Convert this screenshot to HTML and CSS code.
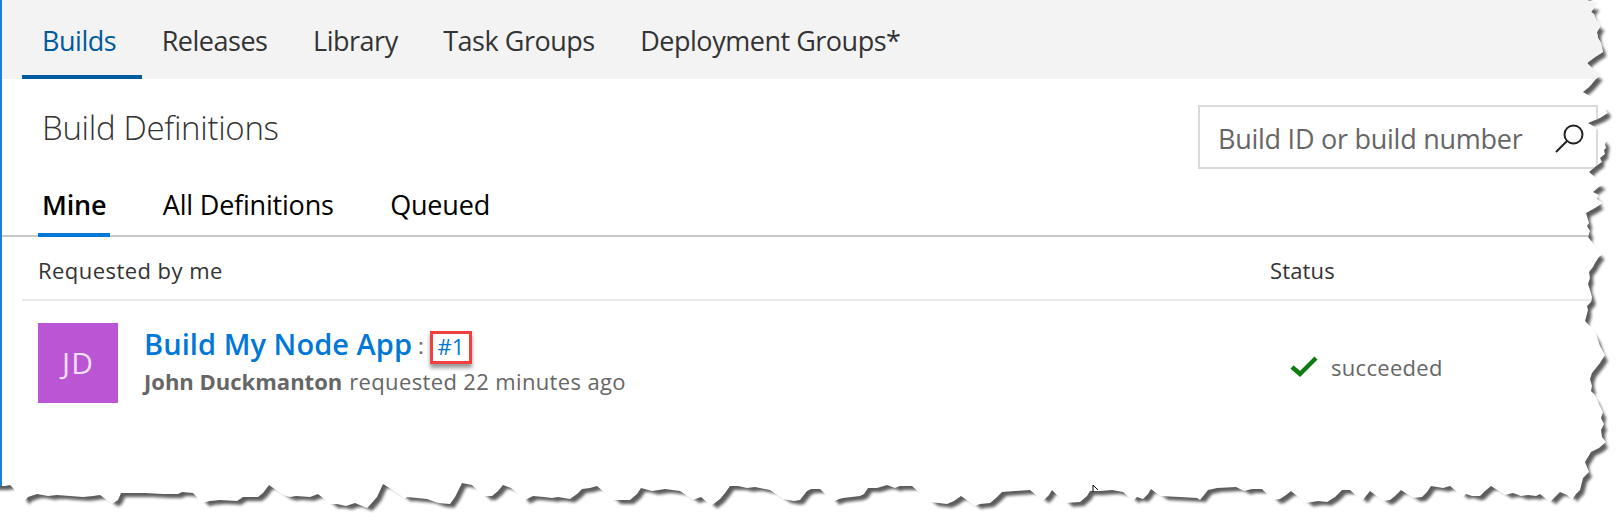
FILE: index.html
```html
<!DOCTYPE html>
<html lang="en">
<head>
<meta charset="utf-8">
<title>Build Definitions</title>
<link rel="stylesheet" href="styles.css">
</head>
<body>
<div class="stage">
  <svg class="paper" width="1624" height="523" viewBox="0 0 1624 523" aria-hidden="true">
    <defs>
      <filter id="shade" filterUnits="userSpaceOnUse" x="-20" y="-20" width="1664" height="563" color-interpolation-filters="sRGB">
        <feMorphology in="SourceAlpha" operator="erode" radius="2"/>
        <feOffset dx="5.5" dy="5.5"/>
        <feGaussianBlur stdDeviation="1.6"/>
        <feComponentTransfer result="cast"><feFuncA type="linear" slope=".64"/></feComponentTransfer>
        <feMerge><feMergeNode in="cast"/><feMergeNode in="SourceGraphic"/></feMerge>
      </filter>
      <path id="sheet" d="M-20 -20H1590L1586 0L1598 3L1594 8L1591 12L1594 14L1596 20L1601 23L1600 27L1597 32L1598 38L1601 43L1602 48L1603 52L1595 57L1587 63L1592 68L1601 74L1596 79L1591 85L1588 88L1583 92L1590 96L1599 101L1608 108L1606 111L1608 113L1600 118L1588 123L1595 127L1602 135L1607 140L1605 144L1606 148L1604 150L1605 154L1600 158L1602 162L1596 166L1589 172L1595 177L1605 184L1599 187L1593 192L1599 195L1597 199L1603 203L1595 208L1586 213L1589 223L1587 226L1590 231L1588 237L1597 248L1603 254L1599 257L1595 263L1593 267L1589 272L1590 278L1588 284L1590 290L1592 297L1591 302L1587 306L1588 310L1585 321L1592 328L1596 334L1598 340L1600 346L1605 355L1600 363L1592 373L1590 379L1592 386L1591 391L1595 395L1599 404L1603 412L1601 418L1604 424L1601 430L1602 437L1606 442L1599 448L1591 452L1585 462L1589 472L1583 478L1580 490L1576 494L1572 500L1567 495L1560 492L1550 502L1540 494L1536 496L1528 495L1521 496L1513 493L1505 495L1491 486L1485 491L1480 496L1472 496L1466 494L1463 497L1450 486L1443 488L1431 486L1427 492L1422 497L1413 498L1401 490L1395 496L1390 500L1383 501L1370 491L1362 501L1350 490L1342 490L1335 497L1327 502L1318 501L1306 503L1291 491L1286 495L1280 499L1273 500L1262 489L1252 489L1244 491L1236 487L1217 488L1208 490L1200 500L1197 498L1180 497L1160 496L1151 489L1148 494L1143 499L1137 497L1133 501L1123 492L1112 490L1100 491L1090 491L1087 496L1080 502L1065 503L1058 496L1052 490L1049 495L1043 501L1030 490L1015 491L1002 492L996 498L990 503L980 504L975 506L961 496L954 501L947 504L930 502L912 486L900 486L895 488L887 485L877 488L868 488L864 494L860 496L843 498L839 499L833 502L820 489L811 489L807 491L800 500L794 501L783 499L770 490L755 487L747 488L738 486L730 486L725 493L720 499L711 506L701 497L693 500L680 491L665 489L652 491L641 488L637 494L630 500L613 500L597 486L590 488L582 489L577 494L570 499L558 497L552 498L544 497L533 496L523 501L517 493L511 488L503 485L498 491L492 496L483 496L472 485L462 483L455 497L450 504L438 503L427 499L417 498L407 497L404 499L400 495L388 487L383 484L377 497L370 505L367 508L355 503L346 506L337 504L330 504L318 494L310 497L296 496L290 497L283 495L269 485L263 493L258 497L243 497L237 501L220 500L210 501L202 503L193 493L182 492L178 494L163 494L145 493L134 493L121 493L118 500L112 504L100 495L93 496L83 497L70 496L57 495L48 496L37 494L28 497L23 503L13 488L10 485L5 486L-20 486Z"/>
      <clipPath id="torn"><use href="#sheet" x="0"/></clipPath>
    </defs>
    <use href="#sheet" fill="#fff" filter="url(#shade)"/>
  </svg>
  <main class="window">
    <nav class="hubs">
      <a class="hub hub-active">Builds</a>
      <a class="hub">Releases</a>
      <a class="hub">Library</a>
      <a class="hub">Task Groups</a>
      <a class="hub">Deployment Groups*</a>
    </nav>
    <header class="head">
      <h1 class="title">Build Definitions</h1>
      <div class="search">
        <span class="hint">Build ID or build number</span>
        <svg class="lens" width="30" height="30" viewBox="0 0 30 30"><circle cx="19.5" cy="10.5" r="9"/><path d="M13 17L2 28"/></svg>
      </div>
    </header>
    <div class="tabs">
      <a class="tab tab-active">Mine</a>
      <a class="tab">All Definitions</a>
      <a class="tab">Queued</a>
    </div>
    <div class="row cols"><span class="who">Requested by me</span><span class="status">Status</span></div>
    <div class="row build">
      <div class="avatar">JD</div>
      <div class="info">
        <div class="name"><b>Build My Node App</b><span class="colon">:</span><a class="number">#1</a></div>
        <div class="by"><b>John Duckmanton</b><span class="when">requested 22 minutes ago</span></div>
      </div>
      <div class="result">
        <svg class="check" width="28" height="22" viewBox="0 0 28 22"><path d="M2 11L10 18L26 2"/></svg>
        <span>succeeded</span>
      </div>
    </div>
  </main>
  <svg class="cursor" width="7" height="9" viewBox="0 0 7 9"><path d="M1 8V1L6 6"/></svg>
</div>
</body>
</html>
```
FILE: styles.css
```css
* { box-sizing: border-box; }
body { margin: 0; background: #fff; font-family: "Open Sans", "Noto Sans", sans-serif; color: #333; white-space: nowrap; }
.stage { position: relative; width: 1624px; height: 523px; overflow: hidden; }
.paper { position: absolute; inset: 0; }
.window { position: relative; width: 1624px; height: 523px; border-left: 2px solid #1a80da; clip-path: url(#torn); }

.hubs { display: flex; height: 79px; padding-left: 20px; background: #f3f3f3; }
.hub { padding: 0 26px 0 19.5px; font-size: 27px; letter-spacing: -.48px; line-height: 82px; height: 79px; }
.hub-active { padding-left: 20px; color: #005a9e; border-bottom: 4px solid #005a9e; }

.head { display: flex; justify-content: space-between; height: 106px; padding: 26px 26px 0 40px; }
.title { margin: 0; font-weight: 300; font-size: 33px; letter-spacing: -.3px; line-height: 46px; }
.search { display: flex; align-items: center; justify-content: space-between; width: 400px; height: 64px; padding: 0 12px 0 18px; border: 2px solid #dadada; color: #666; font-size: 27px; letter-spacing: -.26px; }
.hint { padding-top: 3px; }
.lens { flex: none; margin-top: 3px; fill: none; stroke: #222; stroke-width: 2; }

.tabs { display: flex; gap: 48.5px; height: 52px; padding-left: 36px; border-bottom: 2px solid #c8c8c8; color: #000; font-size: 27px; letter-spacing: -.2px; line-height: 40px; }
.tab { height: 52px; padding: 0 4px; }
.tab-active { font-weight: 600; border-bottom: 4px solid #0078d7; }

.row { margin-left: 20px; padding-left: 16px; }
.cols { display: flex; height: 64px; border-bottom: 2px solid #eaeaea; font-size: 22px; line-height: 66px; }
.who { width: 1232px; letter-spacing: .45px; }
.status { letter-spacing: .15px; }
.build { display: flex; padding-top: 22px; }
.avatar { width: 80px; height: 80px; background: #ba55d3; color: #f3dff7; font-size: 30px; letter-spacing: 1px; text-align: center; line-height: 80px; }
.info { margin-left: 26px; width: 1146px; }
.name { display: flex; height: 43px; line-height: 42px; font-size: 29px; letter-spacing: .06px; color: #0078d7; }
b { font-weight: 600; }
.by b { font-weight: 700; }
.colon, .number { font-size: 22px; }
.colon { margin: 0 6px; line-height: 44px; color: #666; }
.number { width: 42px; height: 33px; margin-top: 8px; border: 3px solid #f04040; box-shadow: 0 4px 4px #0006; line-height: 25px; text-align: center; }
.by { display: flex; gap: 7px; font-size: 22px; line-height: 31px; color: #666; }
.when { letter-spacing: .36px; }
.result { display: flex; gap: 13px; align-items: center; height: 88px; font-size: 22px; letter-spacing: .3px; color: #666; }
.check { fill: none; stroke: #107c10; stroke-width: 4.5; }
.cursor { position: absolute; left: 1092px; top: 484px; fill: none; stroke: #000; }
```
